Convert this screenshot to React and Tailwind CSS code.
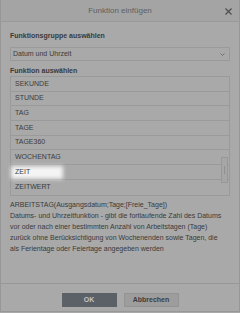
import React from "react";

const items = ["SEKUNDE", "STUNDE", "TAG", "TAGE", "TAGE360", "WOCHENTAG", "ZEIT", "ZEITWERT"];

export default function App() {
  return (
    <div
      className="w-[240px] h-[313px] bg-[#a9a9a9] flex flex-col"
      style={{ fontFamily: '"Liberation Sans", Arial, sans-serif' }}
    >
      <div className="h-[312px] flex flex-col border-l border-r border-b border-[#979797]">
        {/* Header */}
        <div className="h-[22px] shrink-0 bg-[#a4a4a4] border-b border-[#9a9a9a] flex items-center justify-center relative">
          <span className="text-[8px] text-[#5f5f5f]">Funktion einfügen</span>
          <svg className="absolute right-[7px] top-[8px]" width="7" height="7" viewBox="0 0 7 7">
            <path d="M0.5 0.5 L6.5 6.5 M6.5 0.5 L0.5 6.5" stroke="#4d4d4d" strokeWidth="1.2" />
          </svg>
        </div>

        {/* Body */}
        <div className="flex-1 px-[9px] flex flex-col">
          <div className="mt-[9px] text-[7px] leading-[9px] font-bold text-[#3a3a3a]">Funktionsgruppe auswählen</div>
          <div className="mt-[7px] h-[14px] border border-[#9a9a9a] flex items-center justify-between pl-[2px] pr-[4px]">
            <span className="text-[7px] text-[#3a3a3a]">Datum und Uhrzeit</span>
            <svg width="5" height="3" viewBox="0 0 5 3">
              <path d="M0.5 0.5 L2.5 2.5 L4.5 0.5" stroke="#6b6b6b" strokeWidth="0.9" fill="none" />
            </svg>
          </div>
          <div className="mt-[5px] text-[7px] leading-[9px] font-bold text-[#3a3a3a]">Funktion auswählen</div>
          <div className="mt-[1px] border border-[#9a9a9a] flex relative">
            <div className="flex-1 flex flex-col">
              {items.map((it, i) => (
                <div
                  key={it}
                  className={`h-[14.7px] flex items-center pl-[4px] relative ${i < items.length - 1 ? "border-b border-[#9a9a9a]" : ""}`}
                >
                  {it === "ZEIT" && (
                    <div className="absolute left-[0px] top-[1px] w-[52px] h-[13px] bg-[#f4f4f4] blur-[2px]" />
                  )}
                  <span className="relative text-[7px] text-[#3c3c3c]">{it}</span>
                </div>
              ))}
            </div>
            <div className="absolute right-[1px] top-[80px] w-[7px] h-[26px] border border-[#979797] bg-[#a6a6a6] flex justify-center items-center">
              <div className="w-[1px] h-[8px] bg-[#8f8f8f]" />
            </div>
          </div>

          <div className="mt-[3px] text-[7px] leading-[11px] text-[#3a3a3a] whitespace-nowrap">
            <div>ARBEITSTAG(Ausgangsdatum;Tage;[Freie_Tage])</div>
            <div>Datums- und Uhrzeitfunktion - gibt die fortlaufende Zahl des Datums</div>
            <div>vor oder nach einer bestimmten Anzahl von Arbeitstagen (Tage)</div>
            <div>zurück ohne Berücksichtigung von Wochenenden sowie Tagen, die</div>
            <div>als Ferientage oder Feiertage angegeben werden</div>
          </div>
        </div>

        {/* Footer */}
        <div className="h-[28px] shrink-0 border-t border-[#979797] flex items-start justify-center gap-[7px] pt-[9px]">
          <button className="w-[55px] h-[14px] bg-[#5c6168] text-[7px] font-bold text-[#c4c4c4] flex items-center justify-center">
            OK
          </button>
          <button className="w-[55px] h-[14px] bg-[#9d9d9d] border border-[#939393] text-[7px] font-bold text-[#3d3d3d] flex items-center justify-center">
            Abbrechen
          </button>
        </div>
      </div>
    </div>
  );
}
